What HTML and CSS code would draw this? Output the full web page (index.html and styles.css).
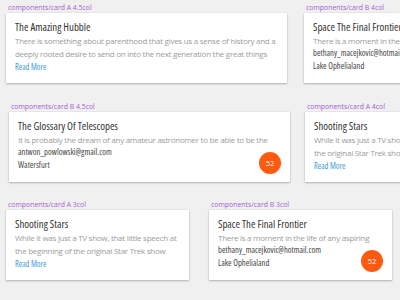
FILE: index.html
```html
<!DOCTYPE html>
<html>
<head>
<meta charset="utf-8">
<link rel="stylesheet" href="styles.css">
</head>
<body>
<div class="canvas">
  <section class="frame f1">
    <div class="label">components/card A 4.5col</div>
    <div class="card c1">
      <div class="title">The Amazing Hubble</div>
      <div class="body"><span>There is something about parenthood that gives us a sense of history and a</span><span>deeply rooted desire to send on into the next generation the great things</span></div>
      <a class="more">Read More</a>
    </div>
  </section>
  <section class="frame f2">
    <div class="label">components/card B 4col</div>
    <div class="card c2">
      <div class="title">Space The Final Frontier</div>
      <div class="body"><span>There is a moment in the life of any aspiring</span></div>
      <div class="meta">bethany_macejkovic@hotmail.com</div>
      <div class="meta">Lake Ophelialand</div>
    </div>
  </section>
  <section class="frame f3">
    <div class="label">components/card B 4.5col</div>
    <div class="card c3">
      <div class="title">The Glossary Of Telescopes</div>
      <div class="body"><span>It is probably the dream of any amateur astronomer to be able to be the</span></div>
      <div class="meta">antwon_powlowski@gmail.com</div>
      <div class="meta">Watersfurt</div>
      <div class="badge">52</div>
    </div>
  </section>
  <section class="frame f4">
    <div class="label">components/card A 4col</div>
    <div class="card c4">
      <div class="title">Shooting Stars</div>
      <div class="body"><span>While it was just a TV show, that little speech at the beginning of</span><span>the original Star Trek show</span></div>
      <a class="more">Read More</a>
    </div>
  </section>
  <section class="frame f5">
    <div class="label">components/card A 3col</div>
    <div class="card c5">
      <div class="title">Shooting Stars</div>
      <div class="body"><span>While it was just a TV show, that little speech at</span><span>the beginning of the original Star Trek show</span></div>
      <a class="more">Read More</a>
    </div>
  </section>
  <section class="frame f6">
    <div class="label">components/card B 3col</div>
    <div class="card c6">
      <div class="title">Space The Final Frontier</div>
      <div class="body"><span>There is a moment in the life of any aspiring</span></div>
      <div class="meta">bethany_macejkovic@hotmail.com</div>
      <div class="meta">Lake Ophelialand</div>
      <div class="badge">52</div>
    </div>
  </section>
</div>
</body>
</html>
```
FILE: styles.css
```css
html, body {
  margin: 0;
  padding: 0;
  width: 400px;
  height: 300px;
  overflow: hidden;
  background: #f0f0f0;
  font-family: "Open Sans", Lato, sans-serif;
}
.canvas {
  position: relative;
  width: 400px;
  height: 300px;
}
.frame {
  position: absolute;
  display: flex;
  flex-direction: column;
}
.f1 { left: 6px; top: 3px; }
.f2 { left: 304px; top: 3px; }
.f3 { left: 9px; top: 102px; }
.f4 { left: 305px; top: 102px; }
.f5 { left: 6px; top: 200px; }
.f6 { left: 209px; top: 200px; }
.label {
  font-size: 6.9px;
  line-height: 10px;
  color: #a35fd6;
  padding-left: 2px;
  white-space: nowrap;
}
.card {
  position: relative;
  box-sizing: border-box;
  height: 70px;
  background: #fff;
  box-shadow: 0 1px 2px rgba(0,0,0,0.25), 0 0 1px rgba(0,0,0,0.15);
  padding: 7px 9px 0 9px;
  display: flex;
  flex-direction: column;
  overflow: hidden;
}
.c1 { width: 281px; }
.c2 { width: 281px; }
.c3 { width: 281px; }
.c4 { width: 281px; }
.c5 { width: 183px; }
.c6 { width: 183px; }
.title {
  font-size: 10.8px;
  font-stretch: 75%;
  line-height: 14px;
  color: #333;
  white-space: nowrap;
}
.body {
  display: flex;
  flex-direction: column;
  font-size: 8px;
  letter-spacing: -0.27px;
  line-height: 13px;
  color: #9c9c9c;
  white-space: nowrap;
}
.meta {
  font-size: 8.6px;
  font-stretch: 75%;
  line-height: 13px;
  color: #444;
  white-space: nowrap;
}
.more {
  font-size: 8.3px;
  font-stretch: 75%;
  line-height: 13px;
  color: #3f9bd6;
}
.badge {
  position: absolute;
  right: 9px;
  bottom: 8px;
  width: 22px;
  height: 22px;
  border-radius: 50%;
  background: #ff5a0f;
  color: #fff;
  font-size: 7.5px;
  display: flex;
  align-items: center;
  justify-content: center;
}
```
